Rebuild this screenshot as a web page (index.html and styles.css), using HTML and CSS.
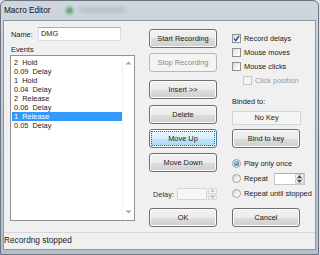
FILE: index.html
```html
<!DOCTYPE html>
<html lang="en">
<head>
   <meta charset="UTF-8">
   <title>Macro Editor</title>
   <link rel="stylesheet" href="styles.css">
</head>
<body>
   <div class="window">
      <div class="titlebar">
         <span class="title">Macro Editor</span>
         <span class="glass-blob"></span>
         <span class="glass-text"></span>
      </div>

      <div class="client">
         <div class="panel">
            <!-- coluna da esquerda: nome e lista de eventos -->
            <div class="col col-left">
               <div class="name-row">
                  <span class="name-label">Name:</span>
                  <div class="textbox">DMG</div>
               </div>
               <div class="events-label">Events</div>
               <div class="listbox">
                  <ul class="items">
                     <li>2  Hold</li>
                     <li>0.09  Delay</li>
                     <li>1  Hold</li>
                     <li>0.04  Delay</li>
                     <li>2  Release</li>
                     <li>0.06  Delay</li>
                     <li class="selected">1  Release</li>
                     <li>0.05  Delay</li>
                  </ul>
                  <div class="vscroll">
                     <svg width="7" height="4" viewBox="0 0 7 4"><path d="M0.5 3.5 L3.5 0.5 L6.5 3.5 Z" fill="#a6a6a6"/></svg>
                     <svg width="7" height="4" viewBox="0 0 7 4"><path d="M0.5 0.5 L3.5 3.5 L6.5 0.5 Z" fill="#a6a6a6"/></svg>
                  </div>
               </div>
            </div>

            <!-- coluna do meio: botões -->
            <div class="col col-mid">
               <button class="btn btn-start">Start Recording</button>
               <button class="btn btn-stop" disabled>Stop Recording</button>
               <button class="btn btn-insert">Insert &gt;&gt;</button>
               <button class="btn btn-delete">Delete</button>
               <button class="btn btn-up focused">Move Up</button>
               <button class="btn btn-down">Move Down</button>

               <div class="delay-row">
                  <span class="delay-label">Delay:</span>
                  <div class="delay-box"></div>
                  <div class="delay-spin">
                     <span class="spin-half"><svg width="5" height="3" viewBox="0 0 5 3"><path d="M0 3 L2.5 0 L5 3 Z" fill="#c4c4c4"/></svg></span>
                     <span class="spin-half"><svg width="5" height="3" viewBox="0 0 5 3"><path d="M0 0 L2.5 3 L5 0 Z" fill="#c4c4c4"/></svg></span>
                  </div>
               </div>

               <button class="btn btn-ok">OK</button>
            </div>

            <!-- coluna da direita: opções -->
            <div class="col col-right">
               <div class="check-row first">
                  <span class="check checked">
                     <svg width="7" height="7" viewBox="0 0 7 7"><path d="M1 3.6 L2.8 5.6 L6 1" fill="none" stroke="#2c4a86" stroke-width="1.4"/></svg>
                  </span>
                  <span>Record delays</span>
               </div>
               <div class="check-row">
                  <span class="check"></span>
                  <span>Mouse moves</span>
               </div>
               <div class="check-row">
                  <span class="check"></span>
                  <span>Mouse clicks</span>
               </div>
               <div class="check-row indent disabled">
                  <span class="check"></span>
                  <span>Click position</span>
               </div>

               <div class="binded-label">Binded to:</div>
               <div class="key-box">No Key</div>
               <button class="btn btn-bind">Bind to key</button>

               <div class="radio-row first">
                  <span class="radio on"><span class="dot"></span></span>
                  <span>Play only once</span>
               </div>
               <div class="radio-row repeat">
                  <span class="radio"></span>
                  <span>Repeat</span>
                  <div class="repeat-box">
                     <div class="repeat-field"></div>
                     <div class="repeat-spin">
                        <span class="spin-half"><svg width="5" height="3" viewBox="0 0 5 3"><path d="M0 3 L2.5 0 L5 3 Z" fill="#4d4d4d"/></svg></span>
                        <span class="spin-half"><svg width="5" height="3" viewBox="0 0 5 3"><path d="M0 0 L2.5 3 L5 0 Z" fill="#4d4d4d"/></svg></span>
                     </div>
                  </div>
               </div>
               <div class="radio-row last">
                  <span class="radio"></span>
                  <span>Repeat until stopped</span>
               </div>

               <button class="btn btn-cancel">Cancel</button>
            </div>
         </div>

         <div class="statusbar">Recordng stopped</div>
      </div>
   </div>
</body>
</html>
```

FILE: styles.css
```css
/* Reset básico */
* {
   margin: 0;
   padding: 0;
   box-sizing: border-box;
   font-family: "Liberation Sans", Arial, sans-serif;
}

body {
   width: 320px;
   height: 255px;
   background-color: #dfe3e7;
   overflow: hidden;
   font-size: 7.4px;
   color: #1a1a1a;
}

/* Janela (moldura estilo Windows 7) */
.window {
   width: 319px;
   height: 255px;
   border: 1px solid #6b7580;
   border-radius: 6px 6px 0 0;
   background: linear-gradient(180deg, #cfd6de 0%, #c3ccd5 30%, #b7c0ca 100%);
   display: flex;
   flex-direction: column;
}

.titlebar {
   height: 19px;
   display: flex;
   align-items: center;
   padding-left: 3px;
   padding-bottom: 1px;
}

.title {
   font-size: 8.2px;
   color: #111;
}

.glass-blob {
   width: 7px;
   height: 7px;
   margin-left: 16px;
   border-radius: 50%;
   background-color: rgba(60, 150, 70, 0.75);
   filter: blur(1.6px);
}

.glass-text {
   width: 46px;
   height: 4px;
   margin-left: 6px;
   border-radius: 2px;
   background-color: rgba(80, 90, 100, 0.22);
   filter: blur(2px);
}

.client {
   margin: 0 2px;
   height: 230px;
   border: 1px solid #8e98a2;
   background-color: #f0f0f0;
   display: flex;
   flex-direction: column;
}

.panel {
   display: flex;
   padding: 6px 0 5px 6px;
   height: 211px;
}

.col {
   display: flex;
   flex-direction: column;
}

/* Coluna esquerda */
.col-left {
   width: 125px;
}

.name-row {
   display: flex;
   align-items: center;
   height: 14px;
}

.name-label {
   width: 28px;
   padding-left: 1px;
}

.textbox {
   width: 83px;
   height: 14px;
   padding-left: 2px;
   line-height: 12px;
   background-color: white;
   border: 1px solid #dadde3;
   border-top-color: #abadb3;
}

.events-label {
   margin-top: 4px;
   height: 9px;
   line-height: 9px;
   padding-left: 1px;
}

.listbox {
   margin-top: 1px;
   height: 166px;
   display: flex;
   background-color: white;
   border: 1px solid #8f949b;
}

.items {
   list-style: none;
   flex: 1;
   padding: 2px 0 0 1px;
}

.items li {
   height: 9px;
   line-height: 9px;
   padding-left: 2px;
   white-space: pre;
}

.items li.selected {
   background-color: #3399ff;
   color: white;
}

.vscroll {
   width: 12px;
   display: flex;
   flex-direction: column;
   justify-content: space-between;
   align-items: center;
   padding: 5px 0 6px;
   border-left: 1px solid #f2f2f2;
}

.vscroll svg {
   display: block;
}

/* Botões estilo Windows 7 */
.btn {
   display: block;
   width: 68px;
   height: 19px;
   font-size: 7.4px;
   color: #1a1a1a;
   border: 1px solid #707070;
   border-radius: 3px;
   background: linear-gradient(180deg, #f2f2f2 0%, #ebebeb 50%, #dddddd 50%, #cfcfcf 100%);
   box-shadow: inset 0 0 0 1px #fbfbfb;
}

.btn:disabled {
   color: #8a8a8a;
   border-color: #b5b9bc;
   background: #f4f4f4;
   box-shadow: none;
}

.btn.focused {
   border-color: #3c7fb1;
   background: linear-gradient(180deg, #eaf6fd 0%, #d9f0fc 50%, #bee6fd 50%, #a7d9f5 100%);
   outline: 1px dotted #3d6485;
   outline-offset: -3px;
}

/* Coluna do meio */
.col-mid {
   width: 68px;
   margin-left: 14px;
}

.btn-start { margin-top: 2px; }
.btn-stop { margin-top: 5px; }
.btn-insert { margin-top: 8px; }
.btn-delete { margin-top: 6px; }
.btn-up { margin-top: 5px; }
.btn-down { margin-top: 5px; }
.btn-ok { margin-top: 8px; }

.delay-row {
   display: flex;
   align-items: center;
   height: 12px;
   margin-top: 16px;
   padding-left: 4px;
}

.delay-label {
   width: 24px;
   color: #333;
}

.delay-box {
   width: 30px;
   height: 12px;
   background-color: #f6f6f6;
   border: 1px solid #d3d6da;
}

.delay-spin {
   width: 9px;
   height: 12px;
   margin-left: 1px;
   display: flex;
   flex-direction: column;
   gap: 1px;
}

.spin-half {
   flex: 1;
   display: flex;
   align-items: center;
   justify-content: center;
   border: 1px solid #d6d6d6;
   border-radius: 1px;
   background-color: #f4f4f4;
}

.spin-half svg {
   display: block;
}

/* Coluna direita */
.col-right {
   width: 69px;
   margin-left: 15px;
}

.check-row,
.radio-row {
   display: flex;
   align-items: center;
   height: 14px;
   gap: 3px;
   white-space: nowrap;
}

.check-row.first {
   margin-top: 4px;
}

.check-row.indent {
   padding-left: 11px;
}

.check-row.disabled {
   color: #9a9a9a;
}

.check {
   flex-shrink: 0;
   width: 9px;
   height: 9px;
   display: flex;
   align-items: center;
   justify-content: center;
   border: 1px solid #8e8f8f;
   background: linear-gradient(135deg, #dcdcdc 0%, #f4f4f4 60%, #ffffff 100%);
}

.check-row.disabled .check {
   border-color: #c6c6c6;
   background: #f4f4f4;
}

.check svg {
   display: block;
}

.binded-label {
   margin-top: 10px;
   height: 9px;
   line-height: 9px;
}

.key-box {
   margin-top: 5px;
   height: 14px;
   line-height: 12px;
   text-align: center;
   background-color: #f4f4f4;
   border: 1px solid #d4d4d4;
}

.btn-bind {
   margin-top: 4px;
}

.radio-row {
   height: 15px;
}

.radio-row.first {
   margin-top: 8px;
}

.radio-row.last {
   height: 14px;
}

.radio-row.repeat {
   width: 73px;
}

.radio {
   flex-shrink: 0;
   width: 9px;
   height: 9px;
   border-radius: 50%;
   display: flex;
   align-items: center;
   justify-content: center;
   border: 1px solid #a2a2a2;
   background: linear-gradient(135deg, #d7d7d7 0%, #f3f3f3 60%, #ffffff 100%);
}

.radio .dot {
   width: 5px;
   height: 5px;
   border-radius: 50%;
   background: radial-gradient(circle at 40% 35%, #a9dcf7 0%, #2d87c8 60%, #1c5d94 100%);
}

.repeat-box {
   flex-shrink: 0;
   margin-left: auto;
   width: 31px;
   height: 12px;
   display: flex;
   background-color: white;
   border: 1px solid #c3c6cb;
   border-top-color: #abadb3;
}

.repeat-field {
   flex: 1;
}

.repeat-spin {
   width: 9px;
   display: flex;
   flex-direction: column;
}

.repeat-spin .spin-half {
   border-color: #c9cdd1;
   background: linear-gradient(180deg, #f7f7f7, #e4e4e4);
}

.btn-cancel {
   margin-top: 8px;
}

/* Barra de status */
.statusbar {
   flex: 1;
   border-top: 1px solid #d7d7d7;
   font-size: 8.3px;
   line-height: 15px;
   padding-left: 0;
   color: #222;
}
```
